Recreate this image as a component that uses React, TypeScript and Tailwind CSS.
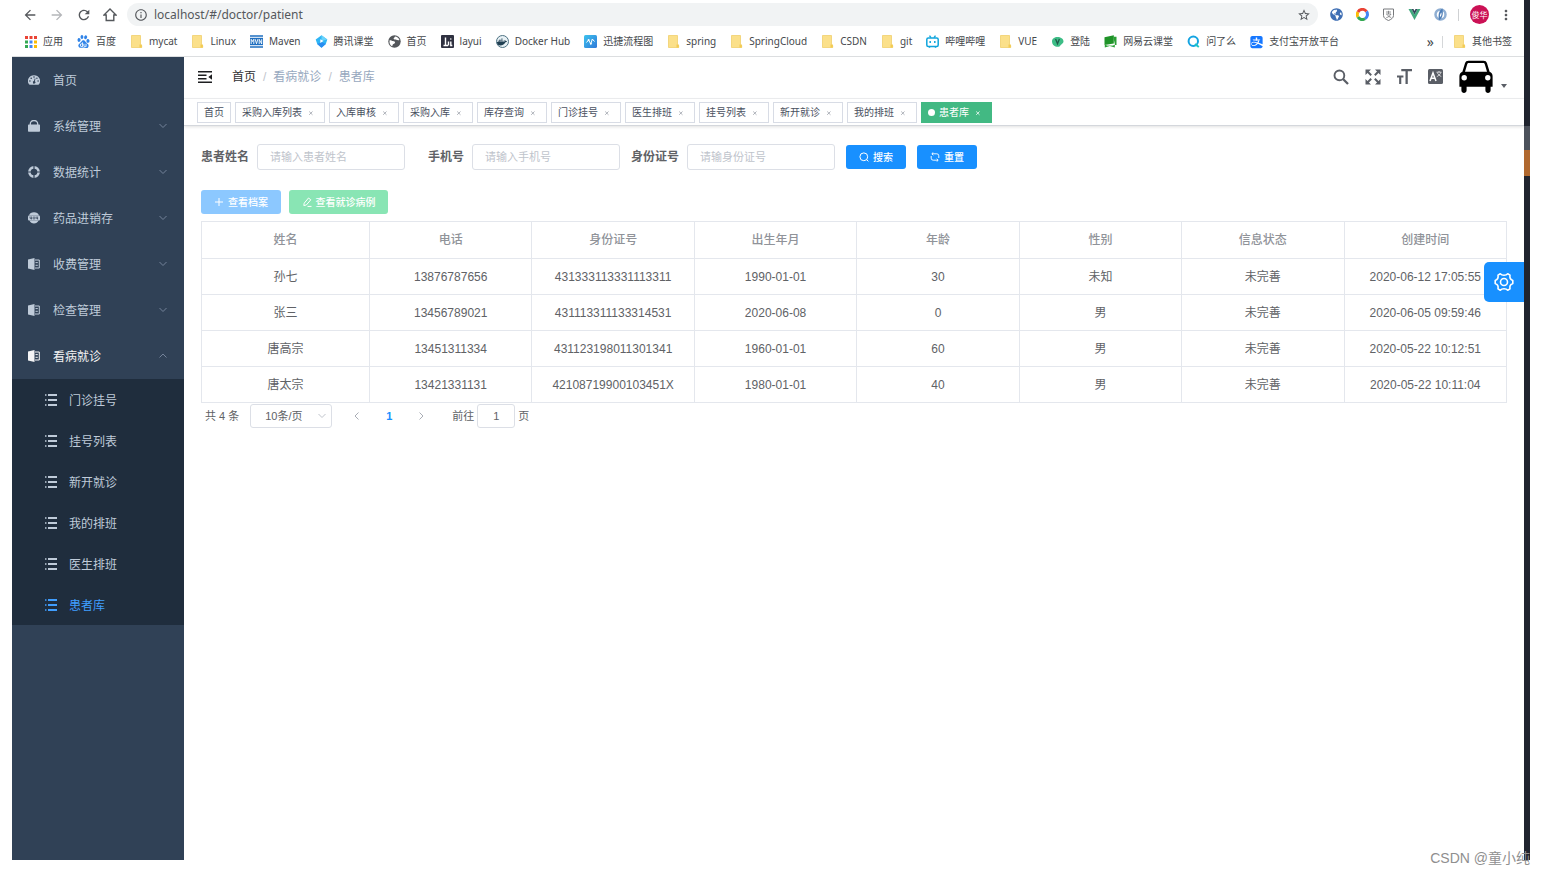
import React from 'react';
import { MdArrowBack, MdArrowForward, MdRefresh, MdInfoOutline, MdStarBorder, MdMoreVert } from 'react-icons/md';
import { FaDocker, FaAlipay, FaGlobeAmericas } from 'react-icons/fa';
import { SiBaidu } from 'react-icons/si';

const UI = "font-['Liberation_Sans','Noto_Sans_CJK_SC',sans-serif]";
const CHROME = "font-['Noto_Sans','Noto_Sans_CJK_SC',sans-serif]";

/* ---------- bookmark icons ---------- */
const Folder = () => (
  <svg viewBox="0 0 13 13" className="size-[13px]">
    <path d="M1.5 .5h9v9l1.2 1v2H1.5z" fill="#fbe08a" />
    <path d="M1.5 .5h9v9l1.2 1v2H1.5z" fill="none" stroke="#f0cf6c" strokeWidth=".8" />
    <path d="M9.5 9.5h2.3v3H9.5z" fill="#f3cb52" />
  </svg>
);
const Apps = () => (
  <svg viewBox="0 0 12 12" className="size-3">
    {['#ea4335', '#ea4335', '#ea4335', '#34a853', '#4285f4', '#fbbc05', '#34a853', '#4285f4', '#fbbc05'].map((c, i) => (
      <rect key={i} x={(i % 3) * 4.5} y={Math.floor(i / 3) * 4.5} width="3" height="3" fill={c} />
    ))}
  </svg>
);
const Maven = () => (
  <svg viewBox="0 0 13 13" className="size-[13px]">
    <path d="M0 1h13M0 12h13" stroke="#1f6fc0" strokeWidth="1.6" />
    <rect y="2.8" width="13" height="7.4" fill="#1f6fc0" />
    <path d="M1.2 9V4.3l1.3 2.2 1.3-2.2V9M5.2 4.2l1.3 4.6 1.3-4.6M9.2 9V4.3l2.5 4.7V4.2" fill="none" stroke="#fff" strokeWidth=".9" />
  </svg>
);
const Tencent = () => (
  <svg viewBox="0 0 13 13" className="size-[13px]">
    <path d="M6.5 .3 12.3 4.4 10.8 9 6.5 12.8 2.2 9 .7 4.4z" fill="#2fb5f5" />
    <path d="M6.5 .3 12.3 4.4 6.5 6z" fill="#69d3fb" />
    <path d="M2.2 9 6.5 12.8 10.8 9 6.5 7z" fill="#2a8cf0" />
    <path d="M5.3 4.2v3.8l3.2-2z" fill="#fff" />
  </svg>
);
const Globe = () => (
  <svg viewBox="0 0 13 13" className="size-[13px]">
    <circle cx="6.5" cy="6.5" r="6.2" fill="#54575b" />
    <path d="M1.6 5.2c1.4-.2 2 .6 3.2.8 1.5.2 2.4.6 2.2 1.7-.2.9-1.500 1-2.200 1.900-.3.5-.2 1.200-.6 1.700-2-.9-3.200-3.500-2.600-6.100zM7 1.500c1.900.1 3.700 1.300 4.400 3.200-.8 1.100-2.300.2-3.100 0-1-.2-2.400.1-2.700-.9-.2-.9 1.100-1.200 1.400-2.300z" fill="#fff" />
  </svg>
);
const Layui = () => (
  <svg viewBox="0 0 13 13" className="size-[13px]">
    <rect width="13" height="13" rx="1" fill="#2f3140" />
    <path d="M2.500 10.500h4.500M4.500 2.500v8M7.500 6.500v4M9.800 6.500v4h1.500" fill="none" stroke="#fff" strokeWidth="1.400" />
    <circle cx="9.800" cy="4" r=".8" fill="#fff" />
  </svg>
);
const Docker = () => (
  <span className="flex size-[13px] items-center justify-center rounded-full border border-[#4d7182] bg-[#e8f1f5]">
    <FaDocker className="size-[10px] text-[#203f52]" />
  </span>
);
const Flow = () => (
  <svg viewBox="0 0 13 13" className="size-[13px]">
    <defs>
      <linearGradient id="flow" x1="0" y1="0" x2="1" y2="1">
        <stop offset="0" stopColor="#3cc3ee" />
        <stop offset="1" stopColor="#2f78d8" />
      </linearGradient>
    </defs>
    <rect width="13" height="13" rx="1.500" fill="url(#flow)" />
    <path d="M2.500 7.500 4.600 5l2.200 4 1.500-5 2.200 2.500" fill="none" stroke="#fff" strokeWidth="1" />
    <circle cx="4.600" cy="5" r="1" fill="#fff" />
    <circle cx="6.800" cy="8.800" r="1" fill="#fff" />
  </svg>
);
const Bili = () => (
  <svg viewBox="0 0 13 13" className="size-[13px]">
    <rect x=".8" y="3" width="11.400" height="8.600" rx="1.500" fill="none" stroke="#10a5dd" strokeWidth="1.500" />
    <path d="M3.500.6 5 2.600M9.500.6 8 2.600M3.500 11.500v1.300M9.500 11.500v1.300" stroke="#10a5dd" strokeWidth="1.400" />
    <path d="M4.200 6v2M8.800 6v2" stroke="#10a5dd" strokeWidth="1.500" />
  </svg>
);
const Login = () => (
  <svg viewBox="0 0 13 13" className="size-[13px]">
    <path d="M1 6.500C1 3.500 3.500 2 6.500 2s6 1.800 6 4.300-2.500 2.800-3.200 4.400c-1.200 1.400-3 1.300-4.800.8S1 9 1 6.500z" fill="#3dbd86" />
    <path d="M4.600 4 6.500 8.800 8.400 4" fill="none" stroke="#205a4b" strokeWidth="1.300" />
  </svg>
);
const NetEase = () => (
  <svg viewBox="0 0 13 13" className="size-[13px]">
    <path d="M.5 2.200 9.800.3v8.200L.5 10z" fill="#1f9328" />
    <path d="M9.300 1.800h3.200v8.200H.8v2.500l5-1.500 5 1.500V9z" fill="#2aa035" />
    <path d="M2.500 10.500h7" stroke="#fff" strokeWidth=".6" />
  </svg>
);
const AskQ = () => (
  <svg viewBox="0 0 13 13" className="size-[13px]">
    <circle cx="6.300" cy="6.300" r="4.700" fill="none" stroke="#14a4e2" strokeWidth="2" />
    <path d="m8 9 3.800 3" stroke="#1bc6c6" strokeWidth="2" />
  </svg>
);
const Alipay = () => <FaAlipay className="size-[14px] text-[#1677ff]" />;
const Baidu = () => <SiBaidu className="size-[13px] text-[#2f83e8]" />;

const bookmarks: [React.ComponentType, string][] = [
  [Apps, '应用'], [Baidu, '百度'], [Folder, 'mycat'], [Folder, 'Linux'], [Maven, 'Maven'],
  [Tencent, '腾讯课堂'], [Globe, '首页'], [Layui, 'layui'], [Docker, 'Docker Hub'], [Flow, '迅捷流程图'],
  [Folder, 'spring'], [Folder, 'SpringCloud'], [Folder, 'CSDN'], [Folder, 'git'], [Bili, '哔哩哔哩'],
  [Folder, 'VUE'], [Login, '登陆'], [NetEase, '网易云课堂'], [AskQ, '问了么'], [Alipay, '支付宝开放平台'],
];

/* ---------- browser chrome ---------- */
function Browser() {
  return (
    <div className={`${CHROME} border-b border-[#dcdee0] bg-white text-[#45484c]`}>
      <div className="flex h-[29px] items-center pr-[10px] pl-[10px] text-[#55585c]">
        <div className="flex shrink-0 items-center gap-[11px]">
          <button aria-label="后退"><MdArrowBack className="size-4" /></button>
          <button aria-label="前进" className="text-[#b4b6b9]"><MdArrowForward className="size-4" /></button>
          <button aria-label="刷新"><MdRefresh className="size-4" /></button>
          <button aria-label="主页">
            <svg viewBox="0 0 14 15" className="h-[15px] w-[14px]" fill="none" stroke="currentColor" strokeWidth="1.400">
              <path d="M1 8 7 2l6 6h-2.200v5.500H3.200V8z" />
            </svg>
          </button>
        </div>
        <div className="ml-[10px] flex h-[23px] grow items-center rounded-full bg-[#f1f3f4] px-[7px]">
          <MdInfoOutline className="size-[14px]" />
          <input aria-label="地址" defaultValue="localhost/#/doctor/patient" className="ml-1.5 min-w-0 grow bg-transparent text-xs outline-none" />
          <button aria-label="收藏"><MdStarBorder className="size-[14px]" /></button>
        </div>
        <div className="flex shrink-0 items-center gap-[13px] pl-3">
          <FaGlobeAmericas className="size-[13px] text-[#3f6fb4]" />
          <svg viewBox="0 0 13 13" className="size-[13px]" fill="none" strokeWidth="3">
            <path d="M2 9.100A5 5 0 0 1 2 4" stroke="#fbbc05" />
            <path d="M2 4a5 5 0 0 1 8.500-.5" stroke="#ea4335" />
            <path d="M10.500 3.500a5 5 0 0 1-1.500 7.300" stroke="#4285f4" />
            <path d="M9 10.800a5 5 0 0 1-7-1.700" stroke="#34a853" />
          </svg>
          <svg viewBox="0 0 13 13" className="size-[13px]" fill="none" stroke="#77797c">
            <path d="M1.500 1h10v6.500c0 2.500-2.500 4-5 5-2.500-1-5-2.500-5-5z" />
            <path d="M4 4h5M6.500 2.800V6M4 6h5C8 8 6.500 9 4.200 9.800M5 6.500c1 1.600 2.500 2.500 4.200 3" strokeWidth=".8" />
          </svg>
          <svg viewBox="0 0 13 13" className="size-[13px]">
            <path d="M.5 1h3l3 5.500 3-5.500h3l-6 11z" fill="#41a97d" />
            <path d="M3.500 1h2l1 2 1-2h2l-3 5.500z" fill="#33475b" />
          </svg>
          <svg viewBox="0 0 13 13" className="size-[13px]">
            <circle cx="6.500" cy="6.500" r="5" fill="none" stroke="#8faed2" strokeWidth="2.500" />
            <path d="M8.500.6C5 2.500 4 6 5 12.400c3.500-2 4.500-6 3.500-11.800z" fill="#4f7fb8" />
            <path d="M7.500 4.500c-1.300 1-1.700 2.500-1.500 4.500 1.300-1 1.700-2.500 1.500-4.500z" fill="#fff" />
          </svg>
          <span className="-mx-[2px] h-3 w-px bg-[#cfd1d3]" />
          <span className="-mr-1 flex size-[19px] items-center justify-center rounded-full bg-[#cb1155] text-[8px] text-white">俊华</span>
          <button aria-label="菜单"><MdMoreVert className="size-4" /></button>
        </div>
      </div>
      <div className="flex h-[27px] items-center pr-3 pb-0.5 pl-3 text-[10px] whitespace-nowrap">
        <nav aria-label="书签" className="flex items-center gap-[14px]">
          {bookmarks.map(([Icon, label]) => (
            <a key={label} href="#" className="flex items-center gap-1.5">
              <span className="flex w-[13px] justify-center"><Icon /></span>
              {label}
            </a>
          ))}
        </nav>
        <div className="ml-auto flex items-center gap-1.5">
          <button aria-label="更多书签" className="text-sm leading-none">»</button>
          <span className="mr-1 ml-0.5 h-3 w-px bg-[#d5d7d9]" />
          <a href="#" className="flex items-center gap-1.5"><Folder />其他书签</a>
        </div>
      </div>
    </div>
  );
}

/* ---------- sidebar ---------- */
const Dashboard = () => (
  <svg viewBox="0 0 12 12" className="size-3">
    <path d="M6 1.200a6 5.800 0 0 0-5 9.100c.2.3.4.4.7.4h8.600c.3 0 .5-.1.7-.4A6 5.800 0 0 0 6 1.200z" fill="currentColor" />
    <g fill="#304156">
      <circle cx="6" cy="3" r=".8" /><circle cx="3.200" cy="4.200" r=".8" /><circle cx="1.900" cy="7" r=".8" />
      <circle cx="10.100" cy="7" r=".8" /><circle cx="8.900" cy="4.200" r=".7" />
      <path d="M6.700 4.400l.8.200-.6 2.700a1.300 1.300 0 1 1-.9-.2z" />
    </g>
  </svg>
);
const Lock = () => (
  <svg viewBox="0 0 12 12" className="size-3">
    <rect y="4.600" width="12" height="7.200" rx=".7" fill="currentColor" />
    <path d="M2.300 5V3.700a3.700 3.200 0 0 1 7.400 0V5" fill="none" stroke="currentColor" strokeWidth="1.300" />
  </svg>
);
const Ring = () => (
  <svg viewBox="0 0 12 12" className="size-3">
    <circle cx="6" cy="6" r="4.600" fill="none" stroke="currentColor" strokeWidth="2.600" />
    <path d="M6 0v3.400M6 8.600V12M0 6h3.400M8.600 6H12" stroke="#304156" strokeWidth="1.200" />
  </svg>
);
const Badge404 = () => (
  <svg viewBox="0 0 12 12" className="size-3">
    <path d="M6 .3c2.500 0 4.300 1.200 5 3.100H1C1.700 1.500 3.500.3 6 .3zM1.400 8.600h9.200C9.700 10.600 8 11.500 6 11.500s-3.700-.9-4.600-2.900z" fill="currentColor" />
    <rect y="3.500" width="12" height="5" rx="1" fill="currentColor" />
    <path d="M2 4.500v1.800h1.800M3.400 4.500v3M8.200 4.500v1.800H10M9.600 4.500v3" fill="none" stroke="#304156" strokeWidth=".7" />
    <circle cx="6" cy="6" r="1.100" fill="none" stroke="#304156" strokeWidth=".7" />
  </svg>
);
const Book = () => (
  <svg viewBox="0 0 12 12" className="size-3">
    <path d="M0 1.500 6.500 0v12L0 10.500z" fill="currentColor" />
    <path d="M7 2h4.300v8H7M7.500 4.600h2.300M7.500 7.300h2.300" fill="none" stroke="currentColor" strokeWidth="1" />
  </svg>
);
const ListIcon = () => (
  <svg viewBox="0 0 12 12" className="size-3" stroke="currentColor">
    <path d="M3 1h9M3 6h9M3 11h9" strokeWidth="2" />
    <path d="M0 1h1.500M0 6h1.500M0 11h1.500" strokeWidth="1.500" />
  </svg>
);
const Chevron = ({ d, className }: { d: string; className: string }) => (
  <svg viewBox="0 0 10 10" className={className} fill="none" stroke="currentColor"><path d={d} /></svg>
);
const DOWN = 'M1.500 3 5 6.500 8.500 3';
const UP = 'M1.500 6.500 5 3l3.500 3.500';

const menu: [React.ComponentType, string][] = [
  [Dashboard, '首页'], [Lock, '系统管理'], [Ring, '数据统计'], [Badge404, '药品进销存'],
  [Book, '收费管理'], [Book, '检查管理'], [Book, '看病就诊'],
];
const submenu = ['门诊挂号', '挂号列表', '新开就诊', '我的排班', '医生排班', '患者库'];

function Sidebar() {
  return (
    <nav aria-label="主菜单" className="w-[172px] shrink-0 bg-[#304156] text-xs text-[#bfcbd9]">
      {menu.map(([Icon, label], i) => (
        <button key={label} className={`flex h-[46px] w-full items-center px-4 ${i === 6 ? 'text-[#f4f4f5]' : ''}`}>
          <Icon />
          <span className="ml-[13px] pt-0.5">{label}</span>
          {i > 0 && <Chevron d={i === 6 ? UP : DOWN} className="ml-auto size-[10px] text-[#74839a]" />}
        </button>
      ))}
      <div className="bg-[#1f2d3d]">
        {submenu.map((label) => (
          <a key={label} href="#" className={`flex h-[41px] items-center gap-3 pl-[33px] ${label === '患者库' ? 'text-[#409eff]' : ''}`}>
            <ListIcon />
            <span className="pt-0.5">{label}</span>
          </a>
        ))}
      </div>
    </nav>
  );
}

/* ---------- header ---------- */
function Header() {
  return (
    <header className="flex h-[42px] items-center border-b border-[#eff0f2] pr-[17px] pb-0.5 pl-[14px] text-xs text-[#97a8be]">
      <button aria-label="折叠菜单" className="mr-5 text-[#1d1e20]">
        <svg viewBox="0 0 14 12" className="h-3 w-[14px]" stroke="currentColor" strokeWidth="1.400">
          <path d="M0 .8h14M0 4.300h8.500M0 7.700h8.500M0 11.200h14" />
          <path d="M14 3.300v5.400L10.300 6z" fill="currentColor" stroke="none" />
        </svg>
      </button>
      <nav aria-label="面包屑" className="flex items-center gap-[7px] pt-px">
        <a href="#" className="text-[#303133]">首页</a>
        <span className="text-[#c0c4cc]">/</span>
        <span>看病就诊</span>
        <span className="text-[#c0c4cc]">/</span>
        <span>患者库</span>
      </nav>
      <div className="ml-auto flex items-center gap-4 text-[#5a5e66]">
        <button aria-label="搜索">
          <svg viewBox="0 0 16 16" className="size-4" fill="none" stroke="currentColor">
            <circle cx="6.400" cy="6.400" r="4.900" strokeWidth="1.900" />
            <path d="m10 10 5 5" strokeWidth="2.300" />
          </svg>
        </button>
        <button aria-label="全屏">
          <svg viewBox="0 0 16 16" className="size-4" fill="currentColor" stroke="currentColor">
            <path d="M.5.5H6L.5 6zM15.500.5H10L15.500 6zM.5 15.500H6L.5 10zM15.500 15.500H10l5.500-5.500z" stroke="none" />
            <path d="m2 2 4.200 4.200M14 2 9.800 6.200M2 14l4.200-4.200M14 14 9.800 9.800" strokeWidth="2" />
          </svg>
        </button>
        <button aria-label="字体大小">
          <svg viewBox="0 0 128 128" className="size-[15px]" fill="currentColor">
            <path d="M0 54.857h54.796v18.286H36.531V128H18.265V73.143H0V54.857zm127.857-36.571H91.935V128H72.456V18.286H36.534V0h91.326l-.003 18.286z" />
          </svg>
        </button>
        <button aria-label="语言">
          <svg viewBox="0 0 15 15" className="size-[15px]">
            <rect width="15" height="15" rx="1.500" fill="currentColor" />
            <path d="M2 12 5 4l3 8M3 9.300h4" fill="none" stroke="#fff" strokeWidth="1.500" />
            <path d="M8.500 3.200h5M11 2v1.200M12.800 3.400c-.6 2-2 3.400-4 4.200M9.300 3.600c.7 1.800 2.200 3.200 4 3.900" fill="none" stroke="#fff" strokeWidth=".7" />
          </svg>
        </button>
        <button aria-label="用户菜单" className="flex items-end text-black">
          <svg viewBox="0 0 34 34" className="size-[34px]">
            <path d="M9.500.8h15c1.800 0 3 .8 3.500 2.500l2.600 8.500c2 1 3 2.400 3 4.500v10.500h-2v3.500c0 3.600-5.200 3.600-5.200 0v-3.500H7.600v3.500c0 3.600-5.200 3.600-5.200 0v-3.500h-2V16.300c0-2.100 1-3.500 3-4.500L6 3.300C6.500 1.600 7.700.8 9.500.8z" fill="currentColor" />
            <path d="M9.800 3h14.400c.9 0 1.300.4 1.600 1.200l2.200 7.500H6l2.200-7.500c.3-.8.7-1.200 1.600-1.200z" fill="#fff" />
            <circle cx="5.200" cy="17.800" r="2.700" fill="#fff" />
            <circle cx="28.800" cy="17.800" r="2.700" fill="#fff" />
          </svg>
          <svg viewBox="0 0 6 4" className="mb-1.5 ml-2 h-1 w-1.5"><path d="M0 0h6L3 4z" fill="#5a5e66" /></svg>
        </button>
      </div>
    </header>
  );
}

const tags = ['首页', '采购入库列表', '入库审核', '采购入库', '库存查询', '门诊挂号', '医生排班', '挂号列表', '新开就诊', '我的排班', '患者库'];

function Tags() {
  return (
    <div className="flex h-[27px] items-center gap-1 border-b border-[#d4d7dc] px-[13px] text-[10px] text-[#495060] shadow-[0_1px_3px_0_rgba(0,0,0,.12)]">
      {tags.map((t, i) => {
        const active = t === '患者库';
        return (
          <a
            key={t}
            href="#"
            className={`flex h-[21px] items-center border px-1.5 whitespace-nowrap ${active ? 'border-[#42b983] bg-[#42b983] text-white' : 'border-[#d8dce5] bg-white'}`}
          >
            {active && <span className="mr-1 size-[7px] rounded-full bg-white" />}
            {t}
            {i > 0 && (
              <svg viewBox="0 0 16 10" className={`h-[10px] w-4 ${active ? 'text-white' : 'text-[#9a9fa8]'}`} fill="none" stroke="currentColor" strokeWidth=".8">
                <path d="m7.200 4.500 3.300 3.300M10.500 4.500 7.200 7.800" />
              </svg>
            )}
          </a>
        );
      })}
    </div>
  );
}

/* ---------- content ---------- */
const fields = [
  { id: 'name', label: '患者姓名', hint: '请输入患者姓名' },
  { id: 'phone', label: '手机号', hint: '请输入手机号' },
  { id: 'card', label: '身份证号', hint: '请输身份证号' },
];
const columns = ['姓名', '电话', '身份证号', '出生年月', '年龄', '性别', '信息状态', '创建时间'];
const patients = [
  ['孙七', '13876787656', '431333113331113311', '1990-01-01', '30', '未知', '未完善', '2020-06-12 17:05:55'],
  ['张三', '13456789021', '431113311133314531', '2020-06-08', '0', '男', '未完善', '2020-06-05 09:59:46'],
  ['唐高宗', '13451311334', '431123198011301341', '1960-01-01', '60', '男', '未完善', '2020-05-22 10:12:51'],
  ['唐太宗', '13421331131', '42108719900103451X', '1980-01-01', '40', '男', '未完善', '2020-05-22 10:11:04'],
];
const btn = 'flex h-6 items-center justify-center gap-1 rounded-[3px] text-[10px] font-medium text-white';

function Content() {
  return (
    <main className="px-[17px] pt-[18px] text-[#606266]">
      <form className="flex items-center gap-[11px]" onSubmit={(e) => e.preventDefault()}>
        {fields.map((f) => (
          <div key={f.id} className="flex items-center">
            <label htmlFor={f.id} className="w-14 pr-2 text-right text-xs font-bold whitespace-nowrap">{f.label}</label>
            <input id={f.id} placeholder={f.hint} className="h-[26px] w-[148px] rounded-[3px] border border-[#dcdfe6] px-3 text-[11px] outline-none placeholder:text-[#c0c4cc]" />
          </div>
        ))}
        <button type="submit" className={`${btn} w-[60px] bg-[#1890ff]`}>
          <svg viewBox="0 0 10 10" className="size-[10px]" fill="none" stroke="currentColor">
            <circle cx="4.800" cy="4.800" r="3.900" /><path d="m7.600 7.600 1.800 1.800" />
          </svg>
          搜索
        </button>
        <button type="reset" className={`${btn} w-[60px] bg-[#1890ff]`}>
          <svg viewBox="0 0 10 10" className="size-[10px]" fill="none" stroke="currentColor" strokeWidth=".9">
            <path d="M8.800 6V3.800A2 2 0 0 0 6.800 1.800H2M3.300.4 1.800 1.800l1.500 1.400M1.200 4v2.200a2 2 0 0 0 2 2H8M6.700 6.800l1.500 1.400-1.500 1.400" />
          </svg>
          重置
        </button>
      </form>

      <div className="mt-5 flex gap-2">
        <button className={`${btn} w-20 bg-[#8cc8ff]`}>
          <svg viewBox="0 0 10 10" className="size-[10px]" stroke="currentColor"><path d="M5 1v8M1 5h8" /></svg>
          查看档案
        </button>
        <button className={`${btn} w-[99px] bg-[#89e5b4]`}>
          <svg viewBox="0 0 10 10" className="size-[10px]" fill="none" stroke="currentColor">
            <path d="M6.500 1 8.800 2.800 4.300 8 1.800 8.500 2.200 6.200zM5.500 9.400h4" />
          </svg>
          查看就诊病例
        </button>
      </div>

      <table className="mt-[7px] w-full table-fixed border-collapse text-center text-xs">
        <thead>
          <tr>
            {columns.map((c, i) => (
              <th key={c} className={`h-[37px] border border-[#e4e7ed] p-0 font-medium text-[#909399] ${i === 0 ? 'w-[168px]' : ''}`}>{c}</th>
            ))}
          </tr>
        </thead>
        <tbody>
          {patients.map((row) => (
            <tr key={row[2]}>
              {row.map((cell, i) => (
                <td key={i} className="h-9 border border-[#e4e7ed] p-0 whitespace-nowrap">{cell}</td>
              ))}
            </tr>
          ))}
        </tbody>
      </table>

      <div className="mt-px flex h-6 items-center pl-1 text-[11px]">
        <span>共 4 条</span>
        <div className="relative ml-[11px]">
          <select aria-label="每页条数" className="h-6 w-[82px] appearance-none rounded-[3px] border border-[#dcdfe6] bg-white pl-[14px] text-[11px]">
            <option>10条/页</option>
          </select>
          <Chevron d={DOWN} className="pointer-events-none absolute top-[7px] right-[5px] size-[10px] text-[#c0c4cc]" />
        </div>
        <button aria-label="上一页" className="ml-5 text-[#a9adb5]"><Chevron d="M6.500 1.500 3 5l3.500 3.500" className="size-[10px]" /></button>
        <button className="w-[54px] text-center font-bold text-[#1890ff]">1</button>
        <button aria-label="下一页" className="text-[#a9adb5]"><Chevron d="M3.500 1.500 7 5 3.500 8.500" className="size-[10px]" /></button>
        <label htmlFor="page" className="ml-[26px]">前往</label>
        <input id="page" defaultValue="1" className="mx-[3px] h-6 w-[38px] rounded-[3px] border border-[#dcdfe6] text-center text-[11px] outline-none" />
        <span>页</span>
      </div>
    </main>
  );
}

export default function App() {
  return (
    <div className={`${UI} relative flex min-h-screen bg-white pr-[14px] pb-[14px] pl-3`}>
      <div className="relative flex min-w-0 grow flex-col">
        <Browser />
        <div className="flex grow">
          <Sidebar />
          <div className="min-w-0 grow">
            <Header />
            <Tags />
            <Content />
          </div>
        </div>
        <button aria-label="设置" className="absolute top-[262px] right-0 flex size-10 items-center justify-center rounded-l-[5px] bg-[#1890ff] text-white">
          <svg viewBox="0 0 20 20" className="size-5" fill="none" stroke="currentColor" strokeWidth="1.600">
            <circle cx="10" cy="10" r="3.500" />
            <path d="M6.300 1.800c1 1.200 2.200 1.500 3.700 1.500s2.700-.3 3.700-1.500l2.300 1.300c-.5 2.500.5 4.500 2.800 5.300v3.200c-2.300.8-3.300 2.800-2.800 5.300l-2.300 1.300c-1-1.200-2.200-1.500-3.700-1.500s-2.700.3-3.700 1.500L4 16.900c.5-2.500-.5-4.500-2.800-5.300V8.400C3.500 7.600 4.500 5.600 4 3.100z" strokeLinejoin="round" />
          </svg>
        </button>
      </div>
      <div className="flex w-1.5 shrink-0 flex-col bg-[#20242f]">
        <div className="mt-[126px] h-6 bg-[#4c515b]" />
        <div className="h-[26px] bg-[#b0682f]" />
      </div>
      <div className="absolute right-[14px] bottom-1.5 text-sm leading-5 text-[#8f8f8f]">CSDN @童小纯</div>
    </div>
  );
}
